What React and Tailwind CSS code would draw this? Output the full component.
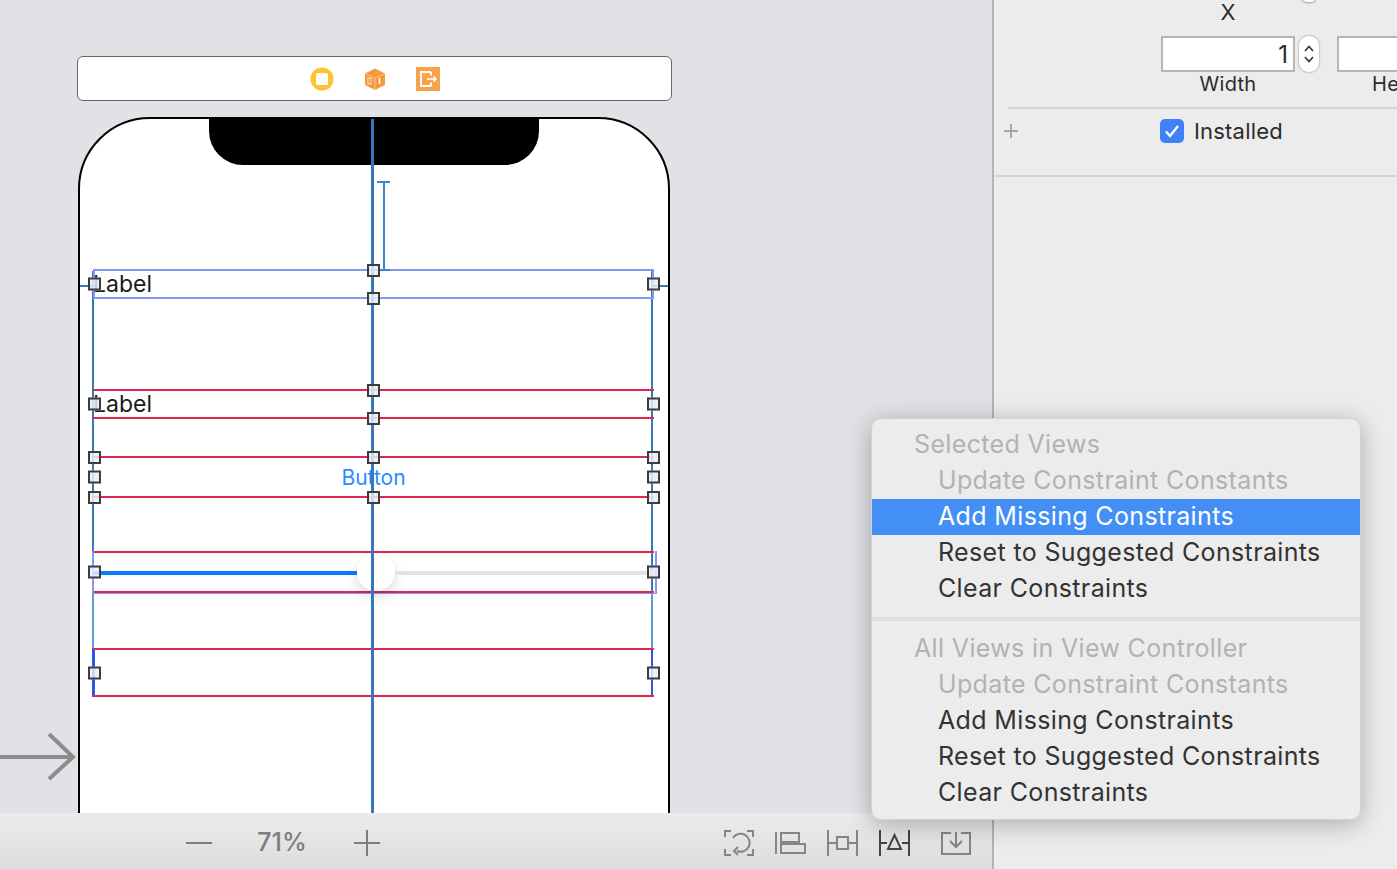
import React from 'react'

const font = "font-['Inter','Noto_Sans',sans-serif]"

const handleX = { l: '-left-[5px]', c: 'left-[274px]', r: '-right-[6px]' }
const handleY = { t: '-top-[7px]', m: 'top-1/2 -translate-y-1/2', b: '-bottom-[8px]' }

function Handle({ x, y }) {
  return <div className={`absolute z-10 w-[13px] h-[13px] border-2 border-[#3d3d3d] bg-[#e8edf8]/85 ${handleX[x]} ${handleY[y]}`} />
}

function SceneBar() {
  return (
    <div className="w-[595px] h-[45px] shrink-0 bg-white border border-[#666] rounded-md flex items-center justify-center gap-[29px]">
      <svg width="24" height="24" viewBox="0 0 24 24">
        <circle cx="12" cy="12" r="11.5" fill="#fdc32f" />
        <rect x="6" y="6" width="12" height="12" rx="1.5" fill="#fff" />
      </svg>
      <svg width="24" height="24" viewBox="0 0 24 24">
        <path d="M12 1.5 22 6.5V18L12 23 2 18V6.5Z" fill="#f59a3c" />
        <path d="M2 6.5 12 11 22 6.5M12 11V23" stroke="#fbc48d" strokeWidth="1" fill="none" />
        <rect x="5" y="11" width="3" height="6" fill="none" stroke="#fde1c4" strokeWidth="1" />
        <path d="M16.5 11v6" stroke="#fff" strokeWidth="1.5" />
      </svg>
      <svg width="24" height="24" viewBox="0 0 24 24">
        <rect width="24" height="24" fill="#f8a24a" />
        <path d="M15 5H5V19H15M15 8.5V5M15 19V15.5" stroke="#fff" strokeWidth="2" fill="none" />
        <path d="M11 12H20M17.5 9.5 20 12 17.5 14.5" stroke="#fff" strokeWidth="1.5" fill="none" />
      </svg>
    </div>
  )
}

function LabelText() {
  return <span className={`text-[23px] leading-none text-[#1a1a1a] ${font}`}>Label</span>
}

function Phone() {
  return (
    <div className="relative w-[592px] h-[800px] ml-[1px] mt-[16px] shrink-0 flex flex-col bg-white border-2 border-black rounded-t-[72px]">
      <div className="w-[330px] h-[48px] -mt-[2px] shrink-0 self-center bg-black rounded-b-[34px]" />

      <div className="relative w-[561px] ml-[13px] mt-[104px] flex flex-col">
        {/* edge guides */}
        <div className="absolute -left-[1px] top-[2px] w-[2px] h-[323px] bg-[#3579b8]" />
        <div className="absolute -left-[1px] top-[325px] w-[2px] h-[54px] bg-[#5b9bd5]" />
        <div className="absolute -left-[1px] top-[379px] w-[3px] h-[49px] bg-[#2f55e8]" />
        <div className="absolute right-[1px] top-[2px] w-[2px] h-[323px] bg-[#3579b8]" />
        <div className="absolute right-[1px] top-[325px] w-[2px] h-[54px] bg-[#5b9bd5]" />
        <div className="absolute right-[1px] top-[379px] w-[2px] h-[49px] bg-[#2f55e8]" />

        <div className="relative h-[30px] flex items-center border-y-2 border-[#8497f5] shadow-[inset_2px_0_#8497f5,inset_-2px_0_#8497f5]">
          <div className="absolute -left-[13px] top-[14px] w-[13px] h-[2px] bg-[#3579b8]" />
          <div className="absolute -right-[14px] top-[14px] w-[14px] h-[2px] bg-[#3579b8]" />
          <div className="absolute left-[284px] -top-[90px] w-[13px] h-[90px] border-y-2 border-[#3f86c7] flex justify-center">
            <div className="w-[2px] bg-[#3f86c7]" />
          </div>
          <LabelText />
          <Handle x="l" y="m" /><Handle x="c" y="t" /><Handle x="c" y="b" /><Handle x="r" y="m" />
        </div>

        <div className="relative h-[30px] mt-[90px] flex items-center border-y-2 border-[#e0264f]">
          <LabelText />
          <Handle x="l" y="m" /><Handle x="c" y="t" /><Handle x="c" y="b" /><Handle x="r" y="m" />
        </div>

        <div className="relative h-[42px] mt-[37px] flex items-center justify-center border-y-2 border-[#e0264f]">
          <span className={`text-[21px] leading-none text-[#2b8cff] ${font}`}>Button</span>
          <Handle x="l" y="t" /><Handle x="l" y="m" /><Handle x="l" y="b" />
          <Handle x="c" y="t" /><Handle x="c" y="b" />
          <Handle x="r" y="t" /><Handle x="r" y="m" /><Handle x="r" y="b" />
        </div>

        <div className="relative h-[42px] mt-[53px] pt-[2px] flex items-center border-y-2 border-[#e0264f]">
          <div className="absolute -left-[1px] -right-[3px] -top-[2px] -bottom-[3px] border-x-2 border-b border-[#8497f5]" />
          <div className="w-[263px] ml-[1px] h-[4px] bg-[#0a7aff]" />
          <div className="w-[38px] h-[38px] -mt-[2px] shrink-0 rounded-full bg-white shadow-[0_6px_14px_rgba(0,0,0,0.14)]" />
          <div className="flex-1 h-[4px] bg-[#e3e3e3]" />
          <Handle x="l" y="m" /><Handle x="r" y="m" />
        </div>

        <div className="relative h-[49px] mt-[55px] border-y-2 border-[#e0264f]">
          <Handle x="l" y="m" /><Handle x="r" y="m" />
        </div>
      </div>

      <div className="absolute left-[291px] top-0 bottom-0 w-[3px] bg-[#3579b8]" />
    </div>
  )
}

function EntryArrow() {
  return (
    <svg className="absolute left-0 top-[730px]" width="78" height="54" viewBox="0 0 78 54" fill="none">
      <path d="M0 27H71M49 4 73 27 49 49" stroke="#8c8c8c" strokeWidth="4" />
    </svg>
  )
}

function BottomBar() {
  return (
    <div className={`h-[56px] shrink-0 flex items-center pt-[4px] bg-gradient-to-b from-[#ebebeb] to-[#dddddd] ${font}`}>
      <svg className="ml-[186px]" width="26" height="4" viewBox="0 0 26 4"><path d="M0 2H26" stroke="#7d7d7d" strokeWidth="2" /></svg>
      <div className="w-[96px] ml-[22px] text-center text-[25px] font-medium text-[#7d7d7d]">71%</div>
      <svg className="ml-[24px]" width="26" height="26" viewBox="0 0 26 26"><path d="M0 13H26M13 0V26" stroke="#7d7d7d" strokeWidth="2" /></svg>

      <svg className="ml-[344px]" width="30" height="26" viewBox="0 0 30 26" fill="none" stroke="#858585" strokeWidth="2">
        <path d="M1 7V1H7M23 1H29V7M29 19V25H23M7 25H1V19" />
        <path d="M9 8A9 9 0 1 1 13 21M14 17 10 21 14 25" />
      </svg>
      <svg className="ml-[21px]" width="31" height="22" viewBox="0 0 31 22" fill="none" stroke="#858585" strokeWidth="2">
        <path d="M1 0V22M6 1H24V10H6ZM6 12H30V21H6Z" />
      </svg>
      <svg className="ml-[21px]" width="31" height="26" viewBox="0 0 31 26" fill="none" stroke="#858585" strokeWidth="2">
        <path d="M1 0V26M30 0V26M1 13H9M22 13H30M10 7H21V19H10Z" />
      </svg>
      <svg className="ml-[21px]" width="31" height="26" viewBox="0 0 31 26" fill="none" stroke="#444" strokeWidth="2">
        <path d="M1 0V26M30 0V26M1 13H8M23 13H30M15.5 5 22 19H9Z" />
      </svg>
      <svg className="ml-[31px]" width="30" height="24" viewBox="0 0 30 24" fill="none" stroke="#858585" strokeWidth="2">
        <path d="M10 2H1V23H29V2H20M15 1V15M9 10 15 16 21 10" />
      </svg>
    </div>
  )
}

function Inspector() {
  return (
    <div className={`w-[405px] h-full shrink-0 bg-[#ececec] border-l-2 border-[#b4b4b4] overflow-hidden ${font} text-[#2b2b2b]`}>
      <div className="h-[107px] relative">
        <div className="absolute left-[307px] -top-[11px] w-[16px] h-[13px] rounded-full bg-white shadow-[0_1px_2px_rgba(0,0,0,0.35)]" />
        <div className="flex items-start w-max ml-[167px]">
          <div className="w-[134px] shrink-0 flex flex-col items-center">
            <div className="text-[22px] leading-[24px] h-[36px] text-center">X</div>
            <div className="w-full h-[36px] bg-white border-2 border-[#b5b5b5] text-right pr-[5px] text-[24px] leading-[34px]">1</div>
            <div className="text-[20px] leading-[24px] tracking-[0.3px]">Width</div>
          </div>
          <div className="ml-[4px] mt-[36px] w-[20px] h-[36px] shrink-0 rounded-[9px] bg-white shadow-[0_0_2px_rgba(0,0,0,0.5)] flex flex-col items-center justify-center gap-[4px]">
            <svg width="10" height="7" viewBox="0 0 10 7" fill="none"><path d="M1 6 5 1.5 9 6" stroke="#333" strokeWidth="1.6" /></svg>
            <svg width="10" height="7" viewBox="0 0 10 7" fill="none"><path d="M1 1 5 5.5 9 1" stroke="#333" strokeWidth="1.6" /></svg>
          </div>
          <div className="ml-[18px] w-[134px] shrink-0 flex flex-col items-center">
            <div className="h-[36px]" />
            <div className="w-full h-[36px] bg-white border-2 border-[#b5b5b5]" />
            <div className="text-[20px] leading-[24px] tracking-[0.3px]">Height</div>
          </div>
        </div>
      </div>
      <div className="h-[2px] ml-[14px] bg-[#d5d5d5]" />
      <div className="h-[66px] flex items-start pt-[10px]">
        <svg className="ml-[10px] mt-[5px]" width="14" height="14" viewBox="0 0 14 14"><path d="M0 7H14M7 0V14" stroke="#a6a6a6" strokeWidth="2" /></svg>
        <div className="ml-[142px] w-[24px] h-[24px] rounded-[5px] bg-[#3f82f7] flex items-center justify-center">
          <svg width="16" height="14" viewBox="0 0 16 14" fill="none"><path d="M2 7.5 6 12 14 2" stroke="#fff" strokeWidth="2.4" /></svg>
        </div>
        <div className="ml-[10px] -mt-[1px] text-[22px] leading-[26px] tracking-[0.2px]">Installed</div>
      </div>
      <div className="h-[2px] bg-[#d5d5d5]" />
    </div>
  )
}

function MenuItem({ children, state }) {
  const color = state === 'off' ? 'text-[#b2b2b2]' : state === 'on' ? 'text-white bg-[#448ff5]' : 'text-[#333]'
  return <div className={`h-[36px] pl-[66px] leading-[34px] whitespace-nowrap ${color}`}>{children}</div>
}

function MenuHeader({ children }) {
  return <div className="h-[36px] pl-[42px] leading-[34px] text-[#b2b2b2] whitespace-nowrap">{children}</div>
}

function ConstraintMenu() {
  return (
    <div className={`absolute left-[871px] top-[418px] w-[490px] h-[402px] pt-[8px] rounded-[10px] bg-[#ececec] border border-[#d2d2d2] shadow-[0_4px_24px_rgba(0,0,0,0.28)] text-[25px] tracking-[0.35px] ${font}`}>
      <MenuHeader>Selected Views</MenuHeader>
      <MenuItem state="off">Update Constraint Constants</MenuItem>
      <MenuItem state="on">Add Missing Constraints</MenuItem>
      <MenuItem>Reset to Suggested Constraints</MenuItem>
      <MenuItem>Clear Constraints</MenuItem>
      <div className="h-[4px] mt-[10px] mb-[10px] bg-[#dfdfdf]" />
      <MenuHeader>All Views in View Controller</MenuHeader>
      <MenuItem state="off">Update Constraint Constants</MenuItem>
      <MenuItem>Add Missing Constraints</MenuItem>
      <MenuItem>Reset to Suggested Constraints</MenuItem>
      <MenuItem>Clear Constraints</MenuItem>
    </div>
  )
}

export default function App() {
  return (
    <div className="relative w-[1397px] h-[869px] overflow-hidden flex bg-[#e0e2e6]">
      <div className="w-[992px] h-full shrink-0 flex flex-col">
        <div className="relative flex-1 min-h-0 overflow-hidden flex flex-col pl-[77px] pt-[56px] bg-[#e0e2e6]">
          <SceneBar />
          <Phone />
          <EntryArrow />
        </div>
        <BottomBar />
      </div>
      <Inspector />
      <ConstraintMenu />
    </div>
  )
}
